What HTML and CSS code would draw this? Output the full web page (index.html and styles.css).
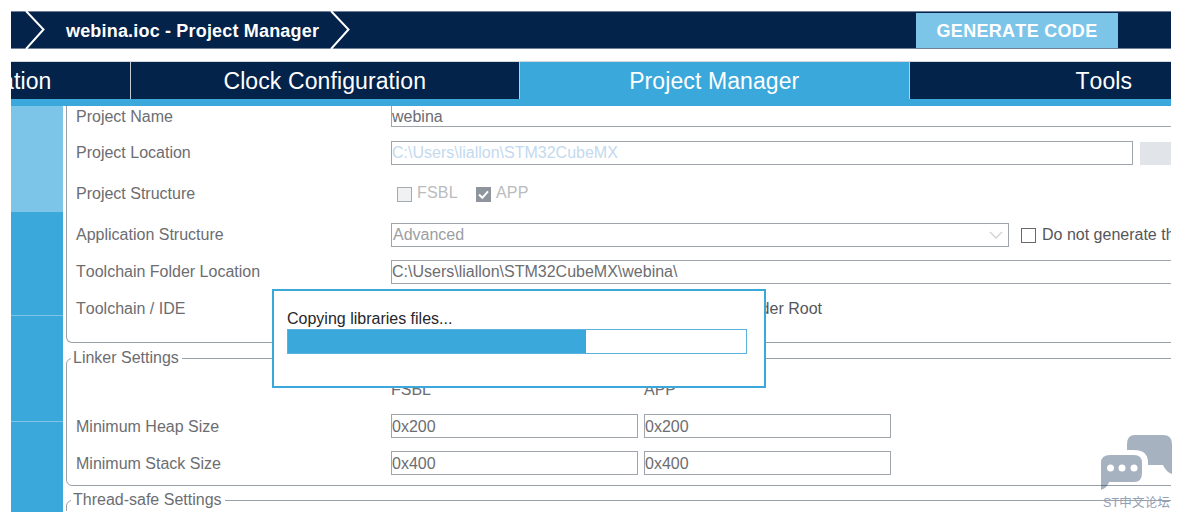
FILE: index.html
```html
<!DOCTYPE html>
<html lang="en">

<head>
    <meta charset="UTF-8">
    <meta name="viewport" content="width=device-width, initial-scale=1.0">
    <title>webina.ioc - Project Manager</title>
    <link rel="stylesheet" href="styles.css">
</head>

<body>
    <div class="window">
        <header class="breadcrumb">
            <svg class="chevron" width="20" height="38" viewBox="0 0 20 38">
                <path d="M1 0 L18.5 18.5 L1 38" />
            </svg>
            <span class="crumb">webina.ioc - Project Manager</span>
            <svg class="chevron" width="20" height="38" viewBox="0 0 20 38">
                <path d="M1 0 L18.5 18.5 L1 38" />
            </svg>
            <button class="generate">GENERATE CODE</button>
        </header>

        <nav class="tabs">
            <div class="tab">Pinout &amp; Configuration</div>
            <div class="tab">Clock Configuration</div>
            <div class="tab active">Project Manager</div>
            <div class="tab">Tools</div>
        </nav>

        <div class="content">
            <aside class="sidebar">
                <div class="side-item selected"></div>
                <div class="side-item short"></div>
                <div class="side-item"></div>
                <div class="side-item"></div>
            </aside>

            <main class="panel">
                <fieldset class="group project">
                    <div class="row row-name">
                        <label>Project Name</label>
                        <div class="field wide cut">webina</div>
                    </div>
                    <div class="row row-location">
                        <label>Project Location</label>
                        <div class="field location disabled-path">C:\Users\liallon\STM32CubeMX</div>
                        <div class="browse"></div>
                    </div>
                    <div class="row row-structure">
                        <label>Project Structure</label>
                        <div class="checks">
                            <span class="box off"></span>
                            <span class="check-text">FSBL</span>
                            <span class="box on">
                                <svg width="15" height="15" viewBox="0 0 15 15">
                                    <path d="M3 7.5 L6.3 10.8 L12 4.3" />
                                </svg>
                            </span>
                            <span class="check-text">APP</span>
                        </div>
                    </div>
                    <div class="row">
                        <label>Application Structure</label>
                        <div class="field select">Advanced
                            <svg width="14" height="8" viewBox="0 0 14 8">
                                <path d="M1 1 L7 7 L13 1" />
                            </svg>
                        </div>
                        <span class="box"></span>
                        <span class="option">Do not generate the main()</span>
                    </div>
                    <div class="row spaced">
                        <label>Toolchain Folder Location</label>
                        <div class="field wide">C:\Users\liallon\STM32CubeMX\webina\</div>
                    </div>
                    <div class="row spaced">
                        <label>Toolchain / IDE</label>
                        <div class="ide"></div>
                        <span class="box"></span>
                        <span class="option">Generate Under Root</span>
                    </div>
                </fieldset>

                <fieldset class="group linker">
                    <legend>Linker Settings</legend>
                    <div class="row columns">
                        <label></label>
                        <span class="column">FSBL</span>
                        <span class="column">APP</span>
                    </div>
                    <div class="row row-heap">
                        <label>Minimum Heap Size</label>
                        <div class="field size">0x200</div>
                        <div class="field size">0x200</div>
                    </div>
                    <div class="row spaced">
                        <label>Minimum Stack Size</label>
                        <div class="field size">0x400</div>
                        <div class="field size">0x400</div>
                    </div>
                </fieldset>

                <fieldset class="group thread">
                    <legend>Thread-safe Settings</legend>
                </fieldset>
            </main>
        </div>
    </div>

    <div class="dialog">
        <div class="message">Copying libraries files...</div>
        <div class="progress">
            <div class="bar" style="width: 65%"></div>
        </div>
    </div>

    <div class="watermark">
        <svg width="71" height="56" viewBox="0 0 71 56">
            <path class="bubble" d="M34 0 H62 Q71 0 71 9 V39 Q65 37 62 30 H47 V26 Q46 15 33 15 H26 V9 Q26 0 34 0 Z" />
            <path class="bubble" d="M9 20 H33 Q41 20 41 28 V38 Q41 47 33 47 H8 Q7 52 0 55 V28 Q0 20 9 20 Z" />
            <circle cx="9.5" cy="33" r="3.5" />
            <circle cx="21" cy="33" r="3.5" />
            <circle cx="33" cy="33" r="3.5" />
        </svg>
        <div class="forum">ST中文论坛</div>
    </div>
</body>

</html>
```

FILE: styles.css
```css
* {
    box-sizing: border-box;
}

body {
    margin: 0;
    padding: 11px 9px 6px 11px;
    height: 518px;
    overflow: hidden;
    position: relative;
    background-color: #ffffff;
    color: #6c6d71;
    font-family: "Liberation Sans", Arial, sans-serif;
    font-size: 16px;
    font-kerning: none;
}

.window {
    width: 1160px;
    height: 501px;
    overflow: hidden;
}

/* top bar */
.breadcrumb {
    display: flex;
    align-items: center;
    height: 38px;
    padding-left: 14px;
    background-color: #03234b;
    border-top: 1px solid #70809a;
    border-bottom: 1px solid #70809a;
}

.chevron {
    flex: none;
}

.chevron path {
    fill: none;
    stroke: #ffffff;
    stroke-width: 2;
}

.crumb {
    width: 264px;
    margin-left: 21px;
    padding-top: 2px;
    color: #ffffff;
    font-size: 18px;
    font-weight: bold;
    letter-spacing: 0.18px;
    white-space: nowrap;
}

.generate {
    width: 202px;
    height: 35px;
    margin-left: 566px;
    padding: 2px 0 0;
    border: none;
    background-color: #7cc5e9;
    color: #ffffff;
    font-family: inherit;
    font-size: 18px;
    font-weight: bold;
    font-kerning: none;
    letter-spacing: 0.3px;
}

/* tabs */
.tabs {
    display: flex;
    width: 1560px;
    height: 45px;
    margin: 12px 0 0 -270px;
    border-top: 1px solid #d4d9df;
    border-bottom: 7px solid #3ba8dc;
}

.tab {
    flex: none;
    width: 389.5px;
    padding-top: 5px;
    border-right: 1px solid #c3cbd5;
    background-color: #03234b;
    color: #ffffff;
    font-size: 23px;
    line-height: 28px;
    letter-spacing: 0.1px;
    text-align: center;
    white-space: nowrap;
}

.active {
    background-color: #3ba8dc;
}

/* body */
.content {
    display: flex;
    height: 406px;
    margin-top: -1px;
}

.sidebar {
    flex: none;
    width: 52px;
    padding-top: 1px;
}

.side-item {
    height: 106px;
    background-color: #3ba8dc;
    border-bottom: 1px solid #7cc5e9;
}

.selected {
    background-color: #7cc5e9;
}

.short {
    height: 104px;
}

.panel {
    flex: none;
    width: 1108px;
    padding: 1px 0 0 3px;
    overflow: hidden;
}

.tabs {
    position: relative;
}

.group {
    width: 1140px;
    min-width: 0;
    margin: 0;
    padding: 0 0 0 9px;
    border: 1px solid #9aa0a8;
    border-radius: 6px;
}

.project {
    height: 237px;
    border-top: none;
    border-radius: 0 0 6px 6px;
}

.linker {
    height: 138px;
    margin-top: 5px;
}

.thread {
    height: 60px;
    margin-top: 4px;
}

legend {
    margin-left: -5px;
    padding: 0 3px 0 2px;
    height: 20px;
    line-height: 20px;
}

.row {
    display: flex;
    align-items: center;
    height: 24px;
    white-space: nowrap;
}

.row label {
    flex: none;
    width: 315px;
}

.spaced {
    margin-top: 13px;
}

.row-name {
    height: 21px;
}

.row-location {
    margin-top: 14px;
}

.row-structure {
    height: 58px;
}

.field {
    flex: none;
    height: 24px;
    border: 1px solid #9fa5ab;
    line-height: 22px;
}

.wide {
    width: 860px;
}

.cut {
    height: 21px;
    border-top: none;
}

.location {
    width: 742px;
}

.disabled-path {
    color: #c3d9ee;
}

.browse {
    width: 60px;
    height: 23px;
    margin-left: 7px;
    background-color: #e1e5e9;
}

.checks {
    display: flex;
    align-items: center;
    padding: 0 0 2px 6px;
    color: #babbbd;
}

.box {
    flex: none;
    width: 15px;
    height: 15px;
    border: 1px solid #68696c;
    background-color: #ffffff;
}

.off {
    margin-top: 2px;
    border-color: #a5aab0;
    background-color: #f0f1f3;
}

.on {
    margin-top: 2px;
    border: none;
    background-color: #8f959d;
}

.on svg {
    display: block;
}

.on path {
    fill: none;
    stroke: #ffffff;
    stroke-width: 2;
}

.check-text {
    width: 64px;
    padding-left: 5px;
    letter-spacing: 0.2px;
}

.select {
    display: flex;
    align-items: center;
    justify-content: space-between;
    width: 618px;
    margin-right: 12px;
    padding: 0 5px 0 1px;
    color: #9b9ea3;
}

.select path {
    fill: none;
    stroke: #d0d2d5;
    stroke-width: 1.3;
}

.option {
    padding-left: 6px;
    color: #55565b;
}

.ide {
    width: 257px;
}

/* linker table */
.columns {
    height: 24px;
    margin-top: 10px;
}

.column {
    width: 253px;
}

.row-heap {
    margin-top: 12px;
}

.linker label {
    padding-top: 1px;
}

.size {
    width: 247px;
    margin-right: 6px;
    line-height: 23px;
}

/* progress popup */
.dialog {
    position: absolute;
    left: 272px;
    top: 289px;
    width: 494px;
    height: 99px;
    padding: 18px 18px 0 13px;
    border: 2px solid #3ba8dc;
    background-color: #ffffff;
    color: #26262b;
}

.message {
    height: 20px;
    line-height: 20px;
}

.progress {
    width: 460px;
    height: 25px;
    border: 1px solid #5bb2df;
}

.bar {
    height: 100%;
    background-color: #3ba8dc;
}

/* forum mark */
.watermark {
    position: absolute;
    left: 1101px;
    top: 435px;
    width: 71px;
}

.watermark svg {
    display: block;
}

.bubble {
    fill: rgba(3, 35, 75, 0.35);
}

.watermark circle {
    fill: #ffffff;
}

.forum {
    padding: 2px 0 0 2px;
    color: #93a1b5;
    font-family: "Liberation Sans", "Noto Sans CJK SC", sans-serif;
    font-size: 12.5px;
    line-height: 20px;
    letter-spacing: 0.2px;
    white-space: nowrap;
}
```
